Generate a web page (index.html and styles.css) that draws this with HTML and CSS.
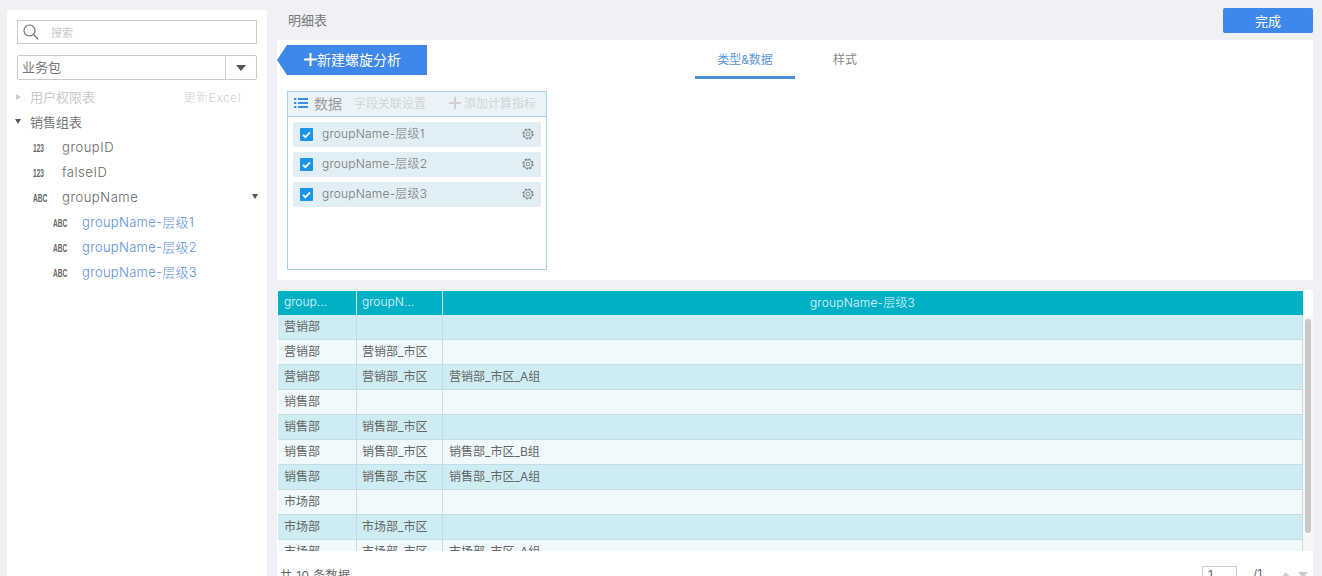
FILE: index.html
```html
<!DOCTYPE html>
<html lang="zh">
<head>
<meta charset="utf-8">
<title>明细表</title>
<link rel="stylesheet" href="styles.css">
</head>
<body>
<div class="page">
  <aside class="side">
    <div class="search">
      <svg class="search-icon" width="18" height="18" viewBox="0 0 18 18"><circle cx="7.5" cy="7.500" r="5.500" fill="none" stroke="#666" stroke-width="1.100"/><path d="M11.500 11.500L16 16" stroke="#666" stroke-width="1.100"/></svg>
      <span class="search-text">搜索</span>
    </div>
    <div class="select">
      <span class="select-text">业务包</span>
      <span class="select-btn"><i class="caret"></i></span>
    </div>
    <div class="tree">
      <div class="row off"><i class="tri-right"></i><span class="grow">用户权限表</span><span class="update">更新Excel</span></div>
      <div class="row"><i class="caret small"></i><span class="grow">销售组表</span></div>
      <div class="row field"><span class="type"><b>123</b></span><span class="grow">groupID</span></div>
      <div class="row field"><span class="type"><b>123</b></span><span class="grow">falseID</span></div>
      <div class="row field"><span class="type"><b>ABC</b></span><span class="grow">groupName</span><i class="caret small end"></i></div>
      <div class="row sub"><span class="type"><b>ABC</b></span><span class="grow">groupName-层级1</span></div>
      <div class="row sub"><span class="type"><b>ABC</b></span><span class="grow">groupName-层级2</span></div>
      <div class="row sub"><span class="type"><b>ABC</b></span><span class="grow">groupName-层级3</span></div>
    </div>
  </aside>
  <main class="main">
    <header class="top">
      <span class="title">明细表</span>
      <button class="done">完成</button>
    </header>
    <section class="config">
      <div class="config-head">
        <div class="new-btn"><svg class="plus" width="13" height="13" viewBox="0 0 13 13"><path d="M6.500 0V13M0 6.500H13" stroke="#fff" stroke-width="2"/></svg>新建螺旋分析</div>
        <nav class="tabs">
          <span class="tab active">类型&amp;数据</span>
          <span class="tab">样式</span>
        </nav>
      </div>
      <div class="data-box">
        <div class="data-head">
          <svg width="14" height="12" viewBox="0 0 14 12"><g fill="#3a8ee6"><rect x="0" y="1" width="2.400" height="2"/><rect x="0" y="5" width="2.400" height="2"/><rect x="0" y="9" width="2.400" height="2"/><rect x="4" y="1" width="10" height="2"/><rect x="4" y="5" width="10" height="2"/><rect x="4" y="9" width="10" height="2"/></g></svg>
          <span class="data-title">数据</span>
          <span class="data-link">字段关联设置</span>
          <span class="data-add"><svg class="add-plus" width="12" height="12" viewBox="0 0 12 12"><path d="M6 0V12M0 6H12" stroke="#d0d0d0" stroke-width="2"/></svg>添加计算指标</span>
        </div>
        <div class="data-list">
          <div class="item"><svg class="check" width="13" height="13" viewBox="0 0 13 13"><rect width="13" height="13" rx="1" fill="#1a94e6"/><path d="M3 6.800L5.400 9.200L10 4.400" fill="none" stroke="#fff" stroke-width="1.800"/></svg><span class="grow item-text">groupName-层级1</span><svg class="gear" width="12" height="12" viewBox="0 0 12 12"><circle cx="6" cy="6" r="1.900" fill="none" stroke="#777" stroke-width=".8"/><circle cx="6" cy="6" r="4.200" fill="none" stroke="#777" stroke-width=".8"/><circle cx="6" cy="6" r="5" fill="none" stroke="#777" stroke-width="1.200" stroke-dasharray="2 1.930"/></svg></div>
          <div class="item"><svg class="check" width="13" height="13" viewBox="0 0 13 13"><rect width="13" height="13" rx="1" fill="#1a94e6"/><path d="M3 6.800L5.400 9.200L10 4.400" fill="none" stroke="#fff" stroke-width="1.800"/></svg><span class="grow item-text">groupName-层级2</span><svg class="gear" width="12" height="12" viewBox="0 0 12 12"><circle cx="6" cy="6" r="1.900" fill="none" stroke="#777" stroke-width=".8"/><circle cx="6" cy="6" r="4.200" fill="none" stroke="#777" stroke-width=".8"/><circle cx="6" cy="6" r="5" fill="none" stroke="#777" stroke-width="1.200" stroke-dasharray="2 1.930"/></svg></div>
          <div class="item"><svg class="check" width="13" height="13" viewBox="0 0 13 13"><rect width="13" height="13" rx="1" fill="#1a94e6"/><path d="M3 6.800L5.400 9.200L10 4.400" fill="none" stroke="#fff" stroke-width="1.800"/></svg><span class="grow item-text">groupName-层级3</span><svg class="gear" width="12" height="12" viewBox="0 0 12 12"><circle cx="6" cy="6" r="1.900" fill="none" stroke="#777" stroke-width=".8"/><circle cx="6" cy="6" r="4.200" fill="none" stroke="#777" stroke-width=".8"/><circle cx="6" cy="6" r="5" fill="none" stroke="#777" stroke-width="1.200" stroke-dasharray="2 1.930"/></svg></div>
        </div>
      </div>
    </section>
    <section class="preview">
      <div class="table-wrap">
        <div class="table-clip">
          <div class="tr th"><span class="c1">group...</span><span class="c2">groupN...</span><span class="c3 center">groupName-层级3</span></div>
          <div class="tr"><span class="c1">营销部</span><span class="c2"></span><span class="c3"></span></div>
          <div class="tr alt"><span class="c1">营销部</span><span class="c2">营销部_市区</span><span class="c3"></span></div>
          <div class="tr"><span class="c1">营销部</span><span class="c2">营销部_市区</span><span class="c3">营销部_市区_A组</span></div>
          <div class="tr alt"><span class="c1">销售部</span><span class="c2"></span><span class="c3"></span></div>
          <div class="tr"><span class="c1">销售部</span><span class="c2">销售部_市区</span><span class="c3"></span></div>
          <div class="tr alt"><span class="c1">销售部</span><span class="c2">销售部_市区</span><span class="c3">销售部_市区_B组</span></div>
          <div class="tr"><span class="c1">销售部</span><span class="c2">销售部_市区</span><span class="c3">销售部_市区_A组</span></div>
          <div class="tr alt"><span class="c1">市场部</span><span class="c2"></span><span class="c3"></span></div>
          <div class="tr"><span class="c1">市场部</span><span class="c2">市场部_市区</span><span class="c3"></span></div>
          <div class="tr alt"><span class="c1">市场部</span><span class="c2">市场部_市区</span><span class="c3">市场部_市区_A组</span></div>
        </div>
        <div class="scroll"><div class="thumb"></div></div>
      </div>
      <footer class="foot">
        <span class="total">共 10 条数据</span>
        <span class="pager"><span class="page-input">1</span><span class="page-total">/1</span><i class="up"></i><i class="down"></i></span>
      </footer>
    </section>
  </main>
</div>
</body>
</html>
```

FILE: styles.css
```css
* { box-sizing: border-box; }
html, body { margin: 0; height: 576px; overflow: hidden; }
body {
  background: #eff1f6;
  color: #666;
  font: 13px Inter, "Noto Sans CJK SC", sans-serif;
}
.page { display: flex; height: 576px; padding: 10px 9px 0 7px; gap: 10px; }
.grow { flex: 1; white-space: nowrap; }

.side { width: 260px; background: #fff; padding: 10px; flex: none; height: 586px; }
.search, .select {
  display: flex; align-items: center; border: 1px solid #ccc; width: 240px;
}
.search { height: 24px; padding-left: 4px; }
.search-icon { flex: none; }
.search-text { margin-left: 11px; font-size: 11px; color: #c8c8c8; }
.select { height: 25px; margin-top: 11px; border-radius: 2px; }
.select-text { flex: 1; padding-left: 4px; font-size: 13px; color: #777; margin-top: -3px; }
.select-btn { width: 31px; height: 23px; border-left: 1px solid #ccc; display: flex; align-items: center; justify-content: center; }
.caret { display: block; width: 0; height: 0; border-style: solid; border-color: #555 transparent transparent; border-width: 6px 5px 0; }
.caret.small { border-width: 5px 3.5px 0; flex: none; }
.tri-right { display: block; flex: none; width: 0; height: 0; border-style: solid; border-color: transparent transparent transparent #ccc; border-width: 3.5px 0 3.5px 5px; }

.tree { margin-top: 4px; }
.row { display: flex; align-items: center; height: 25px; margin-left: -2px; font-size: 13px; color: #777; }
.row > .tri-right { margin: 0 9px 0 1px; }
.row > .caret { margin-right: 9px; }
.row > .caret.end { margin: 0 -1px 0 0; }
.row.off { color: #c9c9c9; padding-right: 16px; }
.update { color: #d0d0d0; font-size: 12px; letter-spacing: .5px; font-weight: 300; }
.row.field { padding-left: 18px; letter-spacing: .55px; font-weight: 300; color: #666; }
.row.sub { padding-left: 38px; color: #5a8fd6; letter-spacing: .3px; font-weight: 300; }
.type { flex: none; width: 29px; padding-top: 3px; letter-spacing: 0; }
.type b {
  display: block; width: 20px; font: 700 10px "Liberation Sans", sans-serif; color: #666;
  transform: scale(.66, 1); transform-origin: left center;
}

.main { flex: 1; min-width: 0; display: flex; flex-direction: column; margin-top: -10px; }
.top { height: 40px; display: flex; align-items: center; justify-content: space-between; padding: 0 0 0 11px; }
.title { font-size: 13px; color: #777; margin-top: -2px; }
.done {
  width: 90px; height: 25px; border: 0; border-radius: 2px;
  background: #3d88e8; color: #fff; font: 13px "Noto Sans CJK SC", sans-serif; padding: 0;
}
.config { height: 240px; background: #fff; padding-top: 5px; }
.config-head { display: flex; height: 34px; }
.new-btn {
  width: 150px; height: 30px; background: #3d88e8; color: #fff; font-size: 14px;
  display: flex; align-items: center; padding: 0 0 2px 27px;
  clip-path: polygon(10px 0, 100% 0, 100% 100%, 10px 100%, 0 50%);
  flex: none;
}
.plus { margin-right: 0; flex: none; }
.tabs { display: flex; margin-left: 268px; }
.tab { width: 100px; height: 34px; text-align: center; font-size: 12px; line-height: 29px; color: #888; }
.tab.active { color: #5a96dc; border-bottom: 3px solid #4a8ed6; }

.data-box { width: 260px; height: 179px; margin: 12px 0 0 10px; border: 1px solid #a9cfe0; }
.data-head {
  display: flex; align-items: center; height: 25px; background: #eaf4f8; border-bottom: 1px solid #a9cfe0;
  padding: 0 0 3px 6px; white-space: nowrap;
}
.data-title { margin-left: 6px; font-size: 14px; color: #999; }
.data-link { margin-left: 12px; font-size: 12px; color: #d4d4d4; }
.data-add { margin-left: 23px; font-size: 12px; color: #d4d4d4; display: flex; align-items: center; }
.add-plus { margin-right: 3px; flex: none; }
.data-list { padding: 5px 5px 0; display: flex; flex-direction: column; gap: 5px; }
.item { height: 25px; background: #e0eff5; border-radius: 2px; display: flex; align-items: center; padding: 0 7px; }
.check { flex: none; }
.item-text { margin-left: 9px; font-size: 12px; color: #777; letter-spacing: .2px; margin-top: -5px; font-weight: 300; }
.gear { flex: none; margin-top: -1px; }

.preview { margin-top: 10px; background: #fff; flex: 1; min-height: 0; display: flex; flex-direction: column; overflow: hidden; }
.table-wrap { display: flex; height: 261px; flex: none; }
.table-clip { width: 1025px; height: 261px; overflow: hidden; margin-left: 1px; padding-top: 1px; flex: none; }
.scroll { flex: 1; padding: 29px 2px 0; background: linear-gradient(#fff 26px, #f6f6f6 26px); }
.thumb { height: 214px; background: #c8c8c8; border-radius: 3px; }
.tr { display: flex; height: 25px; background: #cdedf3; border-bottom: 1px solid #c3dde3; font-size: 12px; color: #666; }
.tr.alt { background: #f0fafc; }
.tr span { display: flex; align-items: center; padding: 0 0 3px 6px; border-right: 1px solid #c3dde3; white-space: nowrap; }
.tr .c2 { padding-left: 5px; }
.c1 { width: 79px; flex: none; }
.c2 { width: 86px; flex: none; }
.c3 { flex: 1; }
.tr.th { height: 24px; background: #00b0c4; color: #e4f6f9; border-bottom: 0; font-weight: 300; }
.tr.th span { border-right: 1px solid #cfeff3; padding-bottom: 4px; }
.tr.th .c3 { border-right: 0; letter-spacing: .2px; }
.tr .center { justify-content: center; padding: 0 21px 4px 0; }

.foot { flex: 1; display: flex; justify-content: space-between; padding: 15px 5px 0 3px; font-size: 12px; color: #666; white-space: nowrap; }
.total { letter-spacing: .4px; }
.pager { display: flex; align-items: flex-start; }
.page-input { width: 35px; height: 22px; border: 1px solid #ccc; padding-left: 5px; }
.page-total { margin-left: 16px; width: 28px; }
.up, .down { display: block; width: 0; height: 0; border-style: solid; margin-top: 6px; }
.up { border-color: transparent transparent #ccc; border-width: 0 5px 6px; }
.down { border-color: #ccc transparent transparent; border-width: 6px 5px 0; margin-left: 7px; }
```
